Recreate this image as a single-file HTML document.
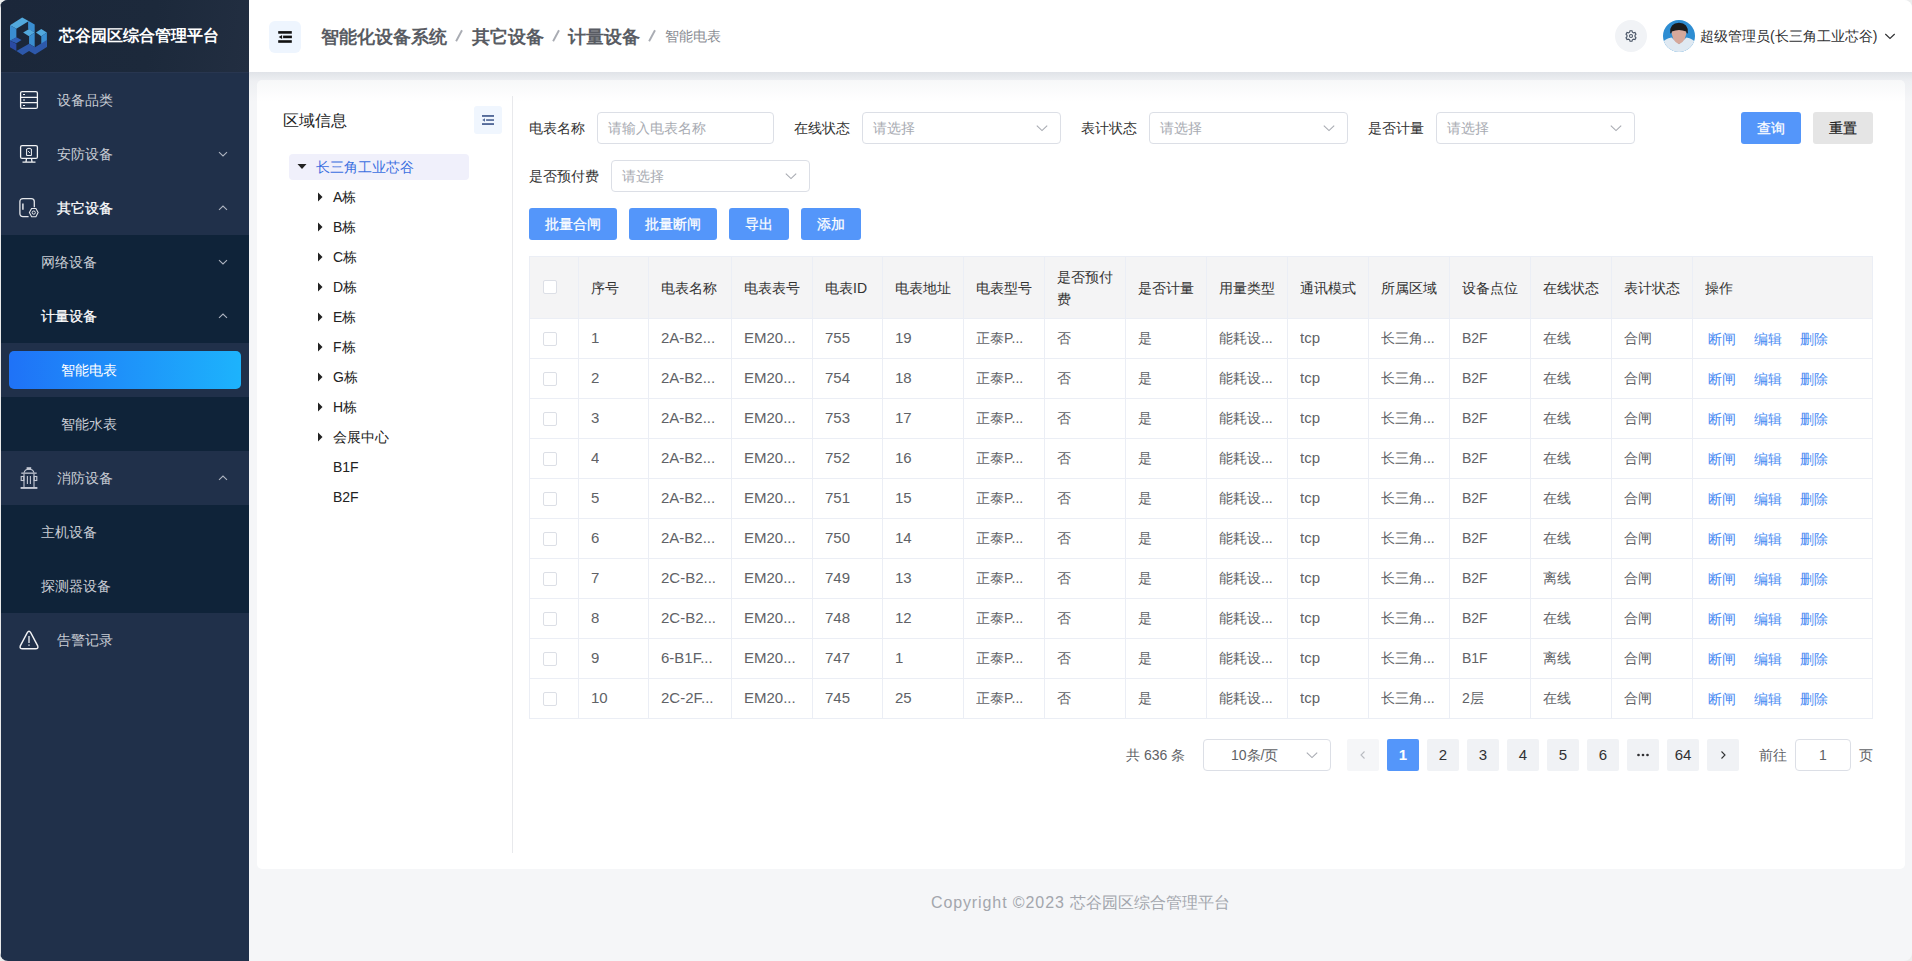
<!DOCTYPE html>
<html><head><meta charset="utf-8">
<style>
*{margin:0;padding:0;box-sizing:border-box}
html,body{width:1912px;height:961px;overflow:hidden;background:#eceded;font-family:"Liberation Sans",sans-serif;font-size:14px;color:#333}
.abs{position:absolute}
#win{position:absolute;left:0;top:0;width:1912px;height:961px;border-radius:8px;overflow:hidden;background:#f5f6f8}
#side{position:absolute;left:0;top:0;width:249px;height:961px;background:#20304a}
#logo{position:absolute;left:0;top:0;width:249px;height:73px;border-bottom:1px solid #283650;background:linear-gradient(100deg,#1b273a 0%,#1c293b 60%,#222e41 100%)}
.mi{position:absolute;left:0;width:249px;height:54px;line-height:54px;color:#c8ccd4;font-size:14px;white-space:nowrap}
.mi .t{position:absolute;left:57px;top:0}
.mi svg.ch{position:absolute;left:217px;top:21px}
.sub{background:#0f2339}
.ico{position:absolute}
#header{position:absolute;left:249px;top:0;width:1663px;height:72px;background:#fff}
#shadow{position:absolute;left:249px;top:72px;width:1663px;height:30px;background:linear-gradient(rgba(40,60,90,0.10),rgba(40,60,90,0.035) 30%,rgba(40,60,90,0))}
#card{position:absolute;left:257px;top:80px;width:1648px;height:789px;background:#fff;border-radius:5px}
.lbl{position:absolute;font-size:14px;color:#333;line-height:32px;height:32px;white-space:nowrap}
.inp{position:absolute;height:32px;border:1px solid #dcdfe6;border-radius:4px;background:#fff;color:#a8abb2;line-height:30px;padding-left:10px;font-size:14px;white-space:nowrap}
.inp svg{position:absolute;right:11px;top:8px}
.btn{position:absolute;height:32px;line-height:32px;border-radius:3px;background:#5496fa;color:#fff;text-align:center;font-size:14px;-webkit-text-stroke:0.25px #fff}
.th,.td{position:absolute;white-space:nowrap;overflow:hidden}
.pg{position:absolute;top:739px;width:32px;height:32px;line-height:32px;border-radius:2px;background:#f0f2f5;color:#303133;text-align:center;font-size:15px}
</style></head><body><div id="win">

<div id="side"><div id="logo"></div>
<svg class="ico" style="left:0;top:0" width="60" height="60" viewBox="0 0 960 960">
<polygon points="160,405 355,280 450,330 450,345 262,458" fill="#52a9dd"/>
<polygon points="160,405 262,458 262,600 160,650" fill="#3a8ed1"/>
<polygon points="160,650 262,595 345,640 262,690" fill="#2f5fb5"/>
<polygon points="160,650 262,700 262,815 160,755" fill="#2a4aa3"/>
<polygon points="450,330 555,390 555,520 450,460" fill="#3a8ed1"/>
<polygon points="370,520 465,463 555,520 465,578" fill="#52a9dd"/>
<polygon points="465,578 555,520 555,752 465,700" fill="#3a8ed1"/>
<polygon points="575,520 660,463 750,520 660,578" fill="#52a9dd"/>
<polygon points="660,578 750,520 750,752 660,700" fill="#3a8ed1"/>
<polygon points="262,815 465,700 560,755 750,640 750,752 560,870 465,815 362,878" fill="#2d58aa"/>
</svg>
<div class="abs" style="left:59px;top:24px;font-size:16px;font-weight:bold;color:#fff;line-height:24px;white-space:nowrap">芯谷园区综合管理平台</div>
<div class="mi" style="top:73px"><span class="t" style="left:57px;">设备品类</span></div>
<div class="mi" style="top:127px"><span class="t" style="left:57px;">安防设备</span><svg class="ch" width="12" height="12" viewBox="0 0 12 12"><path d="M2 4.2 L6 8 L10 4.2" fill="none" stroke="#aeb4c0" stroke-width="1.1"/></svg></div>
<div class="mi" style="top:181px"><span class="t" style="left:57px;color:#fff;-webkit-text-stroke:0.25px #fff;">其它设备</span><svg class="ch" width="12" height="12" viewBox="0 0 12 12"><path d="M2 7.8 L6 4 L10 7.8" fill="none" stroke="#aeb4c0" stroke-width="1.1"/></svg></div>
<div class="mi sub" style="top:235px"><span class="t" style="left:41px;">网络设备</span><svg class="ch" width="12" height="12" viewBox="0 0 12 12"><path d="M2 4.2 L6 8 L10 4.2" fill="none" stroke="#aeb4c0" stroke-width="1.1"/></svg></div>
<div class="mi sub" style="top:289px"><span class="t" style="left:41px;color:#fff;-webkit-text-stroke:0.25px #fff;">计量设备</span><svg class="ch" width="12" height="12" viewBox="0 0 12 12"><path d="M2 7.8 L6 4 L10 7.8" fill="none" stroke="#aeb4c0" stroke-width="1.1"/></svg></div>
<div class="mi" style="top:343px"><div class="abs" style="left:9px;top:8px;width:232px;height:38px;border-radius:5px;background:linear-gradient(90deg,#1f72f7,#1db3fc)"></div><span class="t" style="left:61px;color:#fff">智能电表</span></div>
<div class="mi sub" style="top:397px"><span class="t" style="left:61px;">智能水表</span></div>
<div class="mi" style="top:451px"><span class="t" style="left:57px;">消防设备</span><svg class="ch" width="12" height="12" viewBox="0 0 12 12"><path d="M2 7.8 L6 4 L10 7.8" fill="none" stroke="#aeb4c0" stroke-width="1.1"/></svg></div>
<div class="mi sub" style="top:505px"><span class="t" style="left:41px;">主机设备</span></div>
<div class="mi sub" style="top:559px"><span class="t" style="left:41px;">探测器设备</span></div>
<div class="mi" style="top:613px"><span class="t" style="left:57px;">告警记录</span></div>
<svg class="ico" style="left:19px;top:90px" width="20" height="20" viewBox="0 0 20 20" fill="none" stroke="#f2f3f5" stroke-width="1.3">
<rect x="1.6" y="1.6" width="16.8" height="16.8" rx="1.5"/><line x1="1.6" y1="7.4" x2="18.4" y2="7.4"/><line x1="1.6" y1="12.6" x2="18.4" y2="12.6"/>
<line x1="4" y1="4.5" x2="6" y2="4.5" stroke-width="1.2"/><line x1="4" y1="10" x2="6" y2="10" stroke-width="1.2"/><line x1="4" y1="15.5" x2="6" y2="15.5" stroke-width="1.2"/></svg>
<svg class="ico" style="left:19px;top:144px" width="20" height="20" viewBox="0 0 20 20" fill="none" stroke="#f2f3f5" stroke-width="1.3">
<rect x="1.6" y="1.6" width="16.8" height="12.8" rx="1.5"/><path d="M7.5 14.4 L7 18 M12.5 14.4 L13 18 M3.5 18.2 H16.5"/>
<path d="M7.6 11.5 V5 Q10 3.5 12.4 5 V11.5 Z" stroke-width="1"/><path d="M9 7 L11 9" stroke-width="0.9"/></svg>
<svg class="ico" style="left:18px;top:197px" width="22" height="22" viewBox="0 0 22 22" fill="none" stroke="#e4e6ea" stroke-width="1.3">
<path d="M10.6 19.6 H5 Q1.9 19.6 1.9 16.5 V4.6 Q1.9 1.6 5 1.6 H13.2 Q16.3 1.6 16.3 4.6 V10.2"/><line x1="4.9" y1="6.5" x2="4.9" y2="12.7" stroke-width="1.5"/>
<path d="M13.6 11.5 H17.9 L20.1 15.6 L17.9 19.7 H13.6 L11.4 15.6 Z" stroke-width="1.1"/><circle cx="15.75" cy="15.6" r="1.6" stroke-width="1"/></svg>
<svg class="ico" style="left:19px;top:466px" width="20" height="24" viewBox="0 0 20 24" fill="none" stroke="#c5c9d4" stroke-width="1.1">
<rect x="7.6" y="1.2" width="4.6" height="2.6" fill="#c5c9d4" stroke="none"/><path d="M5 7.2 Q5.5 3.3 10 3.3 Q14.5 3.3 15 7.2"/>
<rect x="2.3" y="6.4" width="15.4" height="1.6" fill="#a3a9b8" stroke="none"/><path d="M5 8 V21.5 M15 8 V21.5"/>
<rect x="2.2" y="10.5" width="2.6" height="4" /><rect x="15.2" y="10.5" width="2.6" height="4"/>
<line x1="8.4" y1="10" x2="8.4" y2="18"/><line x1="11.4" y1="10" x2="11.4" y2="18"/><rect x="1.6" y="21" width="16.8" height="1.9" fill="#c5c9d4" stroke="none"/></svg>
<svg class="ico" style="left:18px;top:629px" width="22" height="22" viewBox="0 0 22 22" fill="none" stroke="#f2f3f5" stroke-width="1.4">
<path d="M9.3 3.6 Q11 1 12.7 3.6 L19.7 16.8 Q20.7 19.8 17.5 19.8 H4.5 Q1.3 19.8 2.3 16.8 Z"/><line x1="11" y1="7" x2="11" y2="14" stroke-width="1.3"/><line x1="11" y1="15.5" x2="11" y2="16.8" stroke-width="1.3"/></svg>
</div>
<div id="header"></div>
<div class="abs" style="left:269px;top:21px;width:32px;height:32px;border-radius:6px;background:#eef5fe"></div>
<svg class="ico" style="left:278px;top:30px" width="14" height="14" viewBox="0 0 14 14" fill="#111">
<rect x="0.2" y="1.1" width="13.6" height="2.6"/><rect x="5.1" y="5.6" width="8.8" height="2.6"/><polygon points="0.7,6.9 4.1,4.9 4.1,8.9"/><rect x="0.2" y="10.2" width="13.6" height="2.6"/></svg>
<div class="abs" style="left:321px;top:25px;font-size:18px;line-height:24px;font-weight:bold;color:#595c63;white-space:nowrap">智能化设备系统</div>
<div class="abs" style="left:472px;top:25px;font-size:18px;line-height:24px;font-weight:bold;color:#595c63;white-space:nowrap">其它设备</div>
<div class="abs" style="left:568px;top:25px;font-size:18px;line-height:24px;font-weight:bold;color:#595c63;white-space:nowrap">计量设备</div>
<svg class="ico" style="left:455px;top:29px" width="8" height="14" viewBox="0 0 8 14"><line x1="1.1" y1="12.3" x2="7" y2="1.3" stroke="#a9acb3" stroke-width="1.9"/></svg>
<svg class="ico" style="left:552px;top:29px" width="8" height="14" viewBox="0 0 8 14"><line x1="1.1" y1="12.3" x2="7" y2="1.3" stroke="#a9acb3" stroke-width="1.9"/></svg>
<svg class="ico" style="left:648px;top:29px" width="8" height="14" viewBox="0 0 8 14"><line x1="1.1" y1="12.3" x2="7" y2="1.3" stroke="#a9acb3" stroke-width="1.9"/></svg>
<div class="abs" style="left:665px;top:25px;font-size:14px;line-height:22px;color:#8a8d93;white-space:nowrap">智能电表</div>
<div class="abs" style="left:1615px;top:20px;width:32px;height:32px;border-radius:50%;background:#f1f3f6"></div>
<svg class="ico" style="left:1625px;top:30px" width="12" height="12" viewBox="0 0 12 12" fill="none" stroke="#4a5567" stroke-width="1.1">
<path d="M5 0.8 H7 L7.4 2.2 L8.6 2.9 L10 2.5 L11 4.2 L10 5.3 V6.7 L11 7.8 L10 9.5 L8.6 9.1 L7.4 9.8 L7 11.2 H5 L4.6 9.8 L3.4 9.1 L2 9.5 L1 7.8 L2 6.7 V5.3 L1 4.2 L2 2.5 L3.4 2.9 L4.6 2.2 Z"/><circle cx="6" cy="6" r="1.5"/></svg>
<svg class="ico" style="left:1663px;top:20px" width="32" height="32" viewBox="0 0 32 32">
<defs><clipPath id="av"><circle cx="16" cy="16" r="16"/></clipPath><filter id="bl"><feGaussianBlur stdDeviation="0.5"/></filter></defs>
<g clip-path="url(#av)"><rect width="32" height="32" fill="#2e8dd2"/><g filter="url(#bl)">
<path d="M-1 23 Q2 18.5 8.5 17.5 L16 24 L23.5 17.5 Q30 18.5 33 23 V33 H-1 Z" fill="#dfe9f2"/>
<path d="M8.4 9 Q8.2 21 16 24.2 Q23.8 21 23.6 9 Z" fill="#d6a89b"/>
<path d="M7.2 13 Q6.5 3 16 2.8 Q25.5 3 24.8 13 Q23.6 14.5 23.2 11.5 Q16 8.5 8.8 11.5 Q8.4 14.5 7.2 13 Z" fill="#1a1b1f"/>
</g></g></svg>
<div class="abs" style="left:1700px;top:24px;font-size:14px;line-height:24px;color:#303133;white-space:nowrap">超级管理员(长三角工业芯谷)</div>
<svg class="ico" style="left:1883px;top:29px" width="14" height="14" viewBox="0 0 14 14"><path d="M2.3 5 L7 9.4 L11.7 5" fill="none" stroke="#303133" stroke-width="1.2"/></svg>
<div id="card"></div><div id="shadow"></div>
<div class="abs" style="left:283px;top:109px;font-size:16px;line-height:24px;color:#222;white-space:nowrap">区域信息</div>
<div class="abs" style="left:474px;top:106px;width:28px;height:28px;border-radius:3px;background:#f0f6fe"></div>
<svg class="ico" style="left:481px;top:113px" width="14" height="14" viewBox="0 0 14 14" fill="#556b9a">
<rect x="1" y="2" width="12" height="1.9"/><rect x="5.1" y="6.2" width="7.9" height="1.7"/><polygon points="1.2,7 4,5.3 4,8.7"/><rect x="1" y="10.1" width="12" height="1.9"/></svg>
<div class="abs" style="left:512px;top:96px;width:1px;height:757px;background:#e8e9ec"></div>
<div class="abs" style="left:289px;top:154px;width:180px;height:26px;border-radius:4px;background:#f0f0fb"></div>
<svg class="ico" style="left:296px;top:162px" width="12" height="10" viewBox="0 0 12 10"><polygon points="1.5,2 10.5,2 6,7" fill="#222"/></svg>
<div class="abs" style="left:316px;top:155px;font-size:14px;line-height:24px;color:#3b6fe0;white-space:nowrap">长三角工业芯谷</div>
<svg class="ico" style="left:315px;top:191px" width="10" height="12" viewBox="0 0 10 12"><polygon points="3,1.5 7.5,6 3,10.5" fill="#222"/></svg>
<div class="abs" style="left:333px;top:185px;font-size:14px;line-height:24px;color:#222;white-space:nowrap">A栋</div>
<svg class="ico" style="left:315px;top:221px" width="10" height="12" viewBox="0 0 10 12"><polygon points="3,1.5 7.5,6 3,10.5" fill="#222"/></svg>
<div class="abs" style="left:333px;top:215px;font-size:14px;line-height:24px;color:#222;white-space:nowrap">B栋</div>
<svg class="ico" style="left:315px;top:251px" width="10" height="12" viewBox="0 0 10 12"><polygon points="3,1.5 7.5,6 3,10.5" fill="#222"/></svg>
<div class="abs" style="left:333px;top:245px;font-size:14px;line-height:24px;color:#222;white-space:nowrap">C栋</div>
<svg class="ico" style="left:315px;top:281px" width="10" height="12" viewBox="0 0 10 12"><polygon points="3,1.5 7.5,6 3,10.5" fill="#222"/></svg>
<div class="abs" style="left:333px;top:275px;font-size:14px;line-height:24px;color:#222;white-space:nowrap">D栋</div>
<svg class="ico" style="left:315px;top:311px" width="10" height="12" viewBox="0 0 10 12"><polygon points="3,1.5 7.5,6 3,10.5" fill="#222"/></svg>
<div class="abs" style="left:333px;top:305px;font-size:14px;line-height:24px;color:#222;white-space:nowrap">E栋</div>
<svg class="ico" style="left:315px;top:341px" width="10" height="12" viewBox="0 0 10 12"><polygon points="3,1.5 7.5,6 3,10.5" fill="#222"/></svg>
<div class="abs" style="left:333px;top:335px;font-size:14px;line-height:24px;color:#222;white-space:nowrap">F栋</div>
<svg class="ico" style="left:315px;top:371px" width="10" height="12" viewBox="0 0 10 12"><polygon points="3,1.5 7.5,6 3,10.5" fill="#222"/></svg>
<div class="abs" style="left:333px;top:365px;font-size:14px;line-height:24px;color:#222;white-space:nowrap">G栋</div>
<svg class="ico" style="left:315px;top:401px" width="10" height="12" viewBox="0 0 10 12"><polygon points="3,1.5 7.5,6 3,10.5" fill="#222"/></svg>
<div class="abs" style="left:333px;top:395px;font-size:14px;line-height:24px;color:#222;white-space:nowrap">H栋</div>
<svg class="ico" style="left:315px;top:431px" width="10" height="12" viewBox="0 0 10 12"><polygon points="3,1.5 7.5,6 3,10.5" fill="#222"/></svg>
<div class="abs" style="left:333px;top:425px;font-size:14px;line-height:24px;color:#222;white-space:nowrap">会展中心</div>
<div class="abs" style="left:333px;top:455px;font-size:14px;line-height:24px;color:#222;white-space:nowrap">B1F</div>
<div class="abs" style="left:333px;top:485px;font-size:14px;line-height:24px;color:#222;white-space:nowrap">B2F</div>
<div class="lbl" style="left:529px;top:112px">电表名称</div>
<div class="inp" style="left:597px;top:112px;width:177px">请输入电表名称</div>
<div class="lbl" style="left:794px;top:112px">在线状态</div>
<div class="inp" style="left:862px;top:112px;width:199px">请选择<svg width="14" height="14" viewBox="0 0 14 14"><path d="M1.8 4.6 L7 9.6 L12.2 4.6" fill="none" stroke="#a8abb2" stroke-width="1.1"/></svg></div>
<div class="lbl" style="left:1081px;top:112px">表计状态</div>
<div class="inp" style="left:1149px;top:112px;width:199px">请选择<svg width="14" height="14" viewBox="0 0 14 14"><path d="M1.8 4.6 L7 9.6 L12.2 4.6" fill="none" stroke="#a8abb2" stroke-width="1.1"/></svg></div>
<div class="lbl" style="left:1368px;top:112px">是否计量</div>
<div class="inp" style="left:1436px;top:112px;width:199px">请选择<svg width="14" height="14" viewBox="0 0 14 14"><path d="M1.8 4.6 L7 9.6 L12.2 4.6" fill="none" stroke="#a8abb2" stroke-width="1.1"/></svg></div>
<div class="lbl" style="left:529px;top:160px">是否预付费</div>
<div class="inp" style="left:611px;top:160px;width:199px">请选择<svg width="14" height="14" viewBox="0 0 14 14"><path d="M1.8 4.6 L7 9.6 L12.2 4.6" fill="none" stroke="#a8abb2" stroke-width="1.1"/></svg></div>
<div class="btn" style="left:1741px;top:112px;width:60px">查询</div>
<div class="btn" style="left:1813px;top:112px;width:60px;background:#e5e5e5;color:#222;-webkit-text-stroke:0.2px #222">重置</div>
<div class="btn" style="left:529px;top:208px;width:88px">批量合闸</div>
<div class="btn" style="left:629px;top:208px;width:88px">批量断闸</div>
<div class="btn" style="left:729px;top:208px;width:60px">导出</div>
<div class="btn" style="left:801px;top:208px;width:60px">添加</div>
<div class="abs" style="left:529px;top:256px;width:1343px;height:62px;background:#f4f4f5"></div>
<div class="abs" style="left:529px;top:256px;width:1px;height:462px;background:#ebeef5"></div>
<div class="abs" style="left:578px;top:256px;width:1px;height:462px;background:#ebeef5"></div>
<div class="abs" style="left:648px;top:256px;width:1px;height:462px;background:#ebeef5"></div>
<div class="abs" style="left:731px;top:256px;width:1px;height:462px;background:#ebeef5"></div>
<div class="abs" style="left:812px;top:256px;width:1px;height:462px;background:#ebeef5"></div>
<div class="abs" style="left:882px;top:256px;width:1px;height:462px;background:#ebeef5"></div>
<div class="abs" style="left:963px;top:256px;width:1px;height:462px;background:#ebeef5"></div>
<div class="abs" style="left:1044px;top:256px;width:1px;height:462px;background:#ebeef5"></div>
<div class="abs" style="left:1125px;top:256px;width:1px;height:462px;background:#ebeef5"></div>
<div class="abs" style="left:1206px;top:256px;width:1px;height:462px;background:#ebeef5"></div>
<div class="abs" style="left:1287px;top:256px;width:1px;height:462px;background:#ebeef5"></div>
<div class="abs" style="left:1368px;top:256px;width:1px;height:462px;background:#ebeef5"></div>
<div class="abs" style="left:1449px;top:256px;width:1px;height:462px;background:#ebeef5"></div>
<div class="abs" style="left:1530px;top:256px;width:1px;height:462px;background:#ebeef5"></div>
<div class="abs" style="left:1611px;top:256px;width:1px;height:462px;background:#ebeef5"></div>
<div class="abs" style="left:1692px;top:256px;width:1px;height:462px;background:#ebeef5"></div>
<div class="abs" style="left:1872px;top:256px;width:1px;height:462px;background:#ebeef5"></div>
<div class="abs" style="left:529px;top:256px;width:1344px;height:1px;background:#ebeef5"></div>
<div class="abs" style="left:529px;top:318px;width:1344px;height:1px;background:#ebeef5"></div>
<div class="abs" style="left:529px;top:358px;width:1344px;height:1px;background:#ebeef5"></div>
<div class="abs" style="left:529px;top:398px;width:1344px;height:1px;background:#ebeef5"></div>
<div class="abs" style="left:529px;top:438px;width:1344px;height:1px;background:#ebeef5"></div>
<div class="abs" style="left:529px;top:478px;width:1344px;height:1px;background:#ebeef5"></div>
<div class="abs" style="left:529px;top:518px;width:1344px;height:1px;background:#ebeef5"></div>
<div class="abs" style="left:529px;top:558px;width:1344px;height:1px;background:#ebeef5"></div>
<div class="abs" style="left:529px;top:598px;width:1344px;height:1px;background:#ebeef5"></div>
<div class="abs" style="left:529px;top:638px;width:1344px;height:1px;background:#ebeef5"></div>
<div class="abs" style="left:529px;top:678px;width:1344px;height:1px;background:#ebeef5"></div>
<div class="abs" style="left:529px;top:718px;width:1344px;height:1px;background:#ebeef5"></div>
<div class="abs" style="left:543px;top:280px;width:14px;height:14px;border:1px solid #dcdfe6;border-radius:2px;background:#fff"></div>
<div class="th" style="left:591px;top:277px;font-size:14px;line-height:22px;color:#333">序号</div>
<div class="th" style="left:661px;top:277px;font-size:14px;line-height:22px;color:#333">电表名称</div>
<div class="th" style="left:744px;top:277px;font-size:14px;line-height:22px;color:#333">电表表号</div>
<div class="th" style="left:825px;top:277px;font-size:14px;line-height:22px;color:#333">电表ID</div>
<div class="th" style="left:895px;top:277px;font-size:14px;line-height:22px;color:#333">电表地址</div>
<div class="th" style="left:976px;top:277px;font-size:14px;line-height:22px;color:#333">电表型号</div>
<div class="th" style="left:1057px;top:266px;font-size:14px;line-height:22px;color:#333">是否预付<br>费</div>
<div class="th" style="left:1138px;top:277px;font-size:14px;line-height:22px;color:#333">是否计量</div>
<div class="th" style="left:1219px;top:277px;font-size:14px;line-height:22px;color:#333">用量类型</div>
<div class="th" style="left:1300px;top:277px;font-size:14px;line-height:22px;color:#333">通讯模式</div>
<div class="th" style="left:1381px;top:277px;font-size:14px;line-height:22px;color:#333">所属区域</div>
<div class="th" style="left:1462px;top:277px;font-size:14px;line-height:22px;color:#333">设备点位</div>
<div class="th" style="left:1543px;top:277px;font-size:14px;line-height:22px;color:#333">在线状态</div>
<div class="th" style="left:1624px;top:277px;font-size:14px;line-height:22px;color:#333">表计状态</div>
<div class="th" style="left:1705px;top:277px;font-size:14px;line-height:22px;color:#333">操作</div>
<div class="abs" style="left:543px;top:332px;width:14px;height:14px;border:1px solid #dcdfe6;border-radius:2px;background:#fff"></div>
<div class="td" style="left:591px;top:327px;font-size:15px;line-height:22px;color:#606266">1</div>
<div class="td" style="left:661px;top:327px;font-size:15px;line-height:22px;color:#606266">2A-B2...</div>
<div class="td" style="left:744px;top:327px;font-size:15px;line-height:22px;color:#606266">EM20...</div>
<div class="td" style="left:825px;top:327px;font-size:15px;line-height:22px;color:#606266">755</div>
<div class="td" style="left:895px;top:327px;font-size:15px;line-height:22px;color:#606266">19</div>
<div class="td" style="left:976px;top:327px;font-size:14px;line-height:22px;color:#606266">正泰P...</div>
<div class="td" style="left:1057px;top:327px;font-size:14px;line-height:22px;color:#606266">否</div>
<div class="td" style="left:1138px;top:327px;font-size:14px;line-height:22px;color:#606266">是</div>
<div class="td" style="left:1219px;top:327px;font-size:14px;line-height:22px;color:#606266">能耗设...</div>
<div class="td" style="left:1300px;top:327px;font-size:15px;line-height:22px;color:#606266">tcp</div>
<div class="td" style="left:1381px;top:327px;font-size:14px;line-height:22px;color:#606266">长三角...</div>
<div class="td" style="left:1462px;top:327px;font-size:14px;line-height:22px;color:#606266">B2F</div>
<div class="td" style="left:1543px;top:327px;font-size:14px;line-height:22px;color:#606266">在线</div>
<div class="td" style="left:1624px;top:327px;font-size:14px;line-height:22px;color:#606266">合闸</div>
<div class="td" style="left:1708px;top:328px;font-size:14px;line-height:22px;color:#4b8cf3">断闸</div>
<div class="td" style="left:1754px;top:328px;font-size:14px;line-height:22px;color:#4b8cf3">编辑</div>
<div class="td" style="left:1800px;top:328px;font-size:14px;line-height:22px;color:#4b8cf3">删除</div>
<div class="abs" style="left:543px;top:372px;width:14px;height:14px;border:1px solid #dcdfe6;border-radius:2px;background:#fff"></div>
<div class="td" style="left:591px;top:367px;font-size:15px;line-height:22px;color:#606266">2</div>
<div class="td" style="left:661px;top:367px;font-size:15px;line-height:22px;color:#606266">2A-B2...</div>
<div class="td" style="left:744px;top:367px;font-size:15px;line-height:22px;color:#606266">EM20...</div>
<div class="td" style="left:825px;top:367px;font-size:15px;line-height:22px;color:#606266">754</div>
<div class="td" style="left:895px;top:367px;font-size:15px;line-height:22px;color:#606266">18</div>
<div class="td" style="left:976px;top:367px;font-size:14px;line-height:22px;color:#606266">正泰P...</div>
<div class="td" style="left:1057px;top:367px;font-size:14px;line-height:22px;color:#606266">否</div>
<div class="td" style="left:1138px;top:367px;font-size:14px;line-height:22px;color:#606266">是</div>
<div class="td" style="left:1219px;top:367px;font-size:14px;line-height:22px;color:#606266">能耗设...</div>
<div class="td" style="left:1300px;top:367px;font-size:15px;line-height:22px;color:#606266">tcp</div>
<div class="td" style="left:1381px;top:367px;font-size:14px;line-height:22px;color:#606266">长三角...</div>
<div class="td" style="left:1462px;top:367px;font-size:14px;line-height:22px;color:#606266">B2F</div>
<div class="td" style="left:1543px;top:367px;font-size:14px;line-height:22px;color:#606266">在线</div>
<div class="td" style="left:1624px;top:367px;font-size:14px;line-height:22px;color:#606266">合闸</div>
<div class="td" style="left:1708px;top:368px;font-size:14px;line-height:22px;color:#4b8cf3">断闸</div>
<div class="td" style="left:1754px;top:368px;font-size:14px;line-height:22px;color:#4b8cf3">编辑</div>
<div class="td" style="left:1800px;top:368px;font-size:14px;line-height:22px;color:#4b8cf3">删除</div>
<div class="abs" style="left:543px;top:412px;width:14px;height:14px;border:1px solid #dcdfe6;border-radius:2px;background:#fff"></div>
<div class="td" style="left:591px;top:407px;font-size:15px;line-height:22px;color:#606266">3</div>
<div class="td" style="left:661px;top:407px;font-size:15px;line-height:22px;color:#606266">2A-B2...</div>
<div class="td" style="left:744px;top:407px;font-size:15px;line-height:22px;color:#606266">EM20...</div>
<div class="td" style="left:825px;top:407px;font-size:15px;line-height:22px;color:#606266">753</div>
<div class="td" style="left:895px;top:407px;font-size:15px;line-height:22px;color:#606266">17</div>
<div class="td" style="left:976px;top:407px;font-size:14px;line-height:22px;color:#606266">正泰P...</div>
<div class="td" style="left:1057px;top:407px;font-size:14px;line-height:22px;color:#606266">否</div>
<div class="td" style="left:1138px;top:407px;font-size:14px;line-height:22px;color:#606266">是</div>
<div class="td" style="left:1219px;top:407px;font-size:14px;line-height:22px;color:#606266">能耗设...</div>
<div class="td" style="left:1300px;top:407px;font-size:15px;line-height:22px;color:#606266">tcp</div>
<div class="td" style="left:1381px;top:407px;font-size:14px;line-height:22px;color:#606266">长三角...</div>
<div class="td" style="left:1462px;top:407px;font-size:14px;line-height:22px;color:#606266">B2F</div>
<div class="td" style="left:1543px;top:407px;font-size:14px;line-height:22px;color:#606266">在线</div>
<div class="td" style="left:1624px;top:407px;font-size:14px;line-height:22px;color:#606266">合闸</div>
<div class="td" style="left:1708px;top:408px;font-size:14px;line-height:22px;color:#4b8cf3">断闸</div>
<div class="td" style="left:1754px;top:408px;font-size:14px;line-height:22px;color:#4b8cf3">编辑</div>
<div class="td" style="left:1800px;top:408px;font-size:14px;line-height:22px;color:#4b8cf3">删除</div>
<div class="abs" style="left:543px;top:452px;width:14px;height:14px;border:1px solid #dcdfe6;border-radius:2px;background:#fff"></div>
<div class="td" style="left:591px;top:447px;font-size:15px;line-height:22px;color:#606266">4</div>
<div class="td" style="left:661px;top:447px;font-size:15px;line-height:22px;color:#606266">2A-B2...</div>
<div class="td" style="left:744px;top:447px;font-size:15px;line-height:22px;color:#606266">EM20...</div>
<div class="td" style="left:825px;top:447px;font-size:15px;line-height:22px;color:#606266">752</div>
<div class="td" style="left:895px;top:447px;font-size:15px;line-height:22px;color:#606266">16</div>
<div class="td" style="left:976px;top:447px;font-size:14px;line-height:22px;color:#606266">正泰P...</div>
<div class="td" style="left:1057px;top:447px;font-size:14px;line-height:22px;color:#606266">否</div>
<div class="td" style="left:1138px;top:447px;font-size:14px;line-height:22px;color:#606266">是</div>
<div class="td" style="left:1219px;top:447px;font-size:14px;line-height:22px;color:#606266">能耗设...</div>
<div class="td" style="left:1300px;top:447px;font-size:15px;line-height:22px;color:#606266">tcp</div>
<div class="td" style="left:1381px;top:447px;font-size:14px;line-height:22px;color:#606266">长三角...</div>
<div class="td" style="left:1462px;top:447px;font-size:14px;line-height:22px;color:#606266">B2F</div>
<div class="td" style="left:1543px;top:447px;font-size:14px;line-height:22px;color:#606266">在线</div>
<div class="td" style="left:1624px;top:447px;font-size:14px;line-height:22px;color:#606266">合闸</div>
<div class="td" style="left:1708px;top:448px;font-size:14px;line-height:22px;color:#4b8cf3">断闸</div>
<div class="td" style="left:1754px;top:448px;font-size:14px;line-height:22px;color:#4b8cf3">编辑</div>
<div class="td" style="left:1800px;top:448px;font-size:14px;line-height:22px;color:#4b8cf3">删除</div>
<div class="abs" style="left:543px;top:492px;width:14px;height:14px;border:1px solid #dcdfe6;border-radius:2px;background:#fff"></div>
<div class="td" style="left:591px;top:487px;font-size:15px;line-height:22px;color:#606266">5</div>
<div class="td" style="left:661px;top:487px;font-size:15px;line-height:22px;color:#606266">2A-B2...</div>
<div class="td" style="left:744px;top:487px;font-size:15px;line-height:22px;color:#606266">EM20...</div>
<div class="td" style="left:825px;top:487px;font-size:15px;line-height:22px;color:#606266">751</div>
<div class="td" style="left:895px;top:487px;font-size:15px;line-height:22px;color:#606266">15</div>
<div class="td" style="left:976px;top:487px;font-size:14px;line-height:22px;color:#606266">正泰P...</div>
<div class="td" style="left:1057px;top:487px;font-size:14px;line-height:22px;color:#606266">否</div>
<div class="td" style="left:1138px;top:487px;font-size:14px;line-height:22px;color:#606266">是</div>
<div class="td" style="left:1219px;top:487px;font-size:14px;line-height:22px;color:#606266">能耗设...</div>
<div class="td" style="left:1300px;top:487px;font-size:15px;line-height:22px;color:#606266">tcp</div>
<div class="td" style="left:1381px;top:487px;font-size:14px;line-height:22px;color:#606266">长三角...</div>
<div class="td" style="left:1462px;top:487px;font-size:14px;line-height:22px;color:#606266">B2F</div>
<div class="td" style="left:1543px;top:487px;font-size:14px;line-height:22px;color:#606266">在线</div>
<div class="td" style="left:1624px;top:487px;font-size:14px;line-height:22px;color:#606266">合闸</div>
<div class="td" style="left:1708px;top:488px;font-size:14px;line-height:22px;color:#4b8cf3">断闸</div>
<div class="td" style="left:1754px;top:488px;font-size:14px;line-height:22px;color:#4b8cf3">编辑</div>
<div class="td" style="left:1800px;top:488px;font-size:14px;line-height:22px;color:#4b8cf3">删除</div>
<div class="abs" style="left:543px;top:532px;width:14px;height:14px;border:1px solid #dcdfe6;border-radius:2px;background:#fff"></div>
<div class="td" style="left:591px;top:527px;font-size:15px;line-height:22px;color:#606266">6</div>
<div class="td" style="left:661px;top:527px;font-size:15px;line-height:22px;color:#606266">2A-B2...</div>
<div class="td" style="left:744px;top:527px;font-size:15px;line-height:22px;color:#606266">EM20...</div>
<div class="td" style="left:825px;top:527px;font-size:15px;line-height:22px;color:#606266">750</div>
<div class="td" style="left:895px;top:527px;font-size:15px;line-height:22px;color:#606266">14</div>
<div class="td" style="left:976px;top:527px;font-size:14px;line-height:22px;color:#606266">正泰P...</div>
<div class="td" style="left:1057px;top:527px;font-size:14px;line-height:22px;color:#606266">否</div>
<div class="td" style="left:1138px;top:527px;font-size:14px;line-height:22px;color:#606266">是</div>
<div class="td" style="left:1219px;top:527px;font-size:14px;line-height:22px;color:#606266">能耗设...</div>
<div class="td" style="left:1300px;top:527px;font-size:15px;line-height:22px;color:#606266">tcp</div>
<div class="td" style="left:1381px;top:527px;font-size:14px;line-height:22px;color:#606266">长三角...</div>
<div class="td" style="left:1462px;top:527px;font-size:14px;line-height:22px;color:#606266">B2F</div>
<div class="td" style="left:1543px;top:527px;font-size:14px;line-height:22px;color:#606266">在线</div>
<div class="td" style="left:1624px;top:527px;font-size:14px;line-height:22px;color:#606266">合闸</div>
<div class="td" style="left:1708px;top:528px;font-size:14px;line-height:22px;color:#4b8cf3">断闸</div>
<div class="td" style="left:1754px;top:528px;font-size:14px;line-height:22px;color:#4b8cf3">编辑</div>
<div class="td" style="left:1800px;top:528px;font-size:14px;line-height:22px;color:#4b8cf3">删除</div>
<div class="abs" style="left:543px;top:572px;width:14px;height:14px;border:1px solid #dcdfe6;border-radius:2px;background:#fff"></div>
<div class="td" style="left:591px;top:567px;font-size:15px;line-height:22px;color:#606266">7</div>
<div class="td" style="left:661px;top:567px;font-size:15px;line-height:22px;color:#606266">2C-B2...</div>
<div class="td" style="left:744px;top:567px;font-size:15px;line-height:22px;color:#606266">EM20...</div>
<div class="td" style="left:825px;top:567px;font-size:15px;line-height:22px;color:#606266">749</div>
<div class="td" style="left:895px;top:567px;font-size:15px;line-height:22px;color:#606266">13</div>
<div class="td" style="left:976px;top:567px;font-size:14px;line-height:22px;color:#606266">正泰P...</div>
<div class="td" style="left:1057px;top:567px;font-size:14px;line-height:22px;color:#606266">否</div>
<div class="td" style="left:1138px;top:567px;font-size:14px;line-height:22px;color:#606266">是</div>
<div class="td" style="left:1219px;top:567px;font-size:14px;line-height:22px;color:#606266">能耗设...</div>
<div class="td" style="left:1300px;top:567px;font-size:15px;line-height:22px;color:#606266">tcp</div>
<div class="td" style="left:1381px;top:567px;font-size:14px;line-height:22px;color:#606266">长三角...</div>
<div class="td" style="left:1462px;top:567px;font-size:14px;line-height:22px;color:#606266">B2F</div>
<div class="td" style="left:1543px;top:567px;font-size:14px;line-height:22px;color:#606266">离线</div>
<div class="td" style="left:1624px;top:567px;font-size:14px;line-height:22px;color:#606266">合闸</div>
<div class="td" style="left:1708px;top:568px;font-size:14px;line-height:22px;color:#4b8cf3">断闸</div>
<div class="td" style="left:1754px;top:568px;font-size:14px;line-height:22px;color:#4b8cf3">编辑</div>
<div class="td" style="left:1800px;top:568px;font-size:14px;line-height:22px;color:#4b8cf3">删除</div>
<div class="abs" style="left:543px;top:612px;width:14px;height:14px;border:1px solid #dcdfe6;border-radius:2px;background:#fff"></div>
<div class="td" style="left:591px;top:607px;font-size:15px;line-height:22px;color:#606266">8</div>
<div class="td" style="left:661px;top:607px;font-size:15px;line-height:22px;color:#606266">2C-B2...</div>
<div class="td" style="left:744px;top:607px;font-size:15px;line-height:22px;color:#606266">EM20...</div>
<div class="td" style="left:825px;top:607px;font-size:15px;line-height:22px;color:#606266">748</div>
<div class="td" style="left:895px;top:607px;font-size:15px;line-height:22px;color:#606266">12</div>
<div class="td" style="left:976px;top:607px;font-size:14px;line-height:22px;color:#606266">正泰P...</div>
<div class="td" style="left:1057px;top:607px;font-size:14px;line-height:22px;color:#606266">否</div>
<div class="td" style="left:1138px;top:607px;font-size:14px;line-height:22px;color:#606266">是</div>
<div class="td" style="left:1219px;top:607px;font-size:14px;line-height:22px;color:#606266">能耗设...</div>
<div class="td" style="left:1300px;top:607px;font-size:15px;line-height:22px;color:#606266">tcp</div>
<div class="td" style="left:1381px;top:607px;font-size:14px;line-height:22px;color:#606266">长三角...</div>
<div class="td" style="left:1462px;top:607px;font-size:14px;line-height:22px;color:#606266">B2F</div>
<div class="td" style="left:1543px;top:607px;font-size:14px;line-height:22px;color:#606266">在线</div>
<div class="td" style="left:1624px;top:607px;font-size:14px;line-height:22px;color:#606266">合闸</div>
<div class="td" style="left:1708px;top:608px;font-size:14px;line-height:22px;color:#4b8cf3">断闸</div>
<div class="td" style="left:1754px;top:608px;font-size:14px;line-height:22px;color:#4b8cf3">编辑</div>
<div class="td" style="left:1800px;top:608px;font-size:14px;line-height:22px;color:#4b8cf3">删除</div>
<div class="abs" style="left:543px;top:652px;width:14px;height:14px;border:1px solid #dcdfe6;border-radius:2px;background:#fff"></div>
<div class="td" style="left:591px;top:647px;font-size:15px;line-height:22px;color:#606266">9</div>
<div class="td" style="left:661px;top:647px;font-size:15px;line-height:22px;color:#606266">6-B1F...</div>
<div class="td" style="left:744px;top:647px;font-size:15px;line-height:22px;color:#606266">EM20...</div>
<div class="td" style="left:825px;top:647px;font-size:15px;line-height:22px;color:#606266">747</div>
<div class="td" style="left:895px;top:647px;font-size:15px;line-height:22px;color:#606266">1</div>
<div class="td" style="left:976px;top:647px;font-size:14px;line-height:22px;color:#606266">正泰P...</div>
<div class="td" style="left:1057px;top:647px;font-size:14px;line-height:22px;color:#606266">否</div>
<div class="td" style="left:1138px;top:647px;font-size:14px;line-height:22px;color:#606266">是</div>
<div class="td" style="left:1219px;top:647px;font-size:14px;line-height:22px;color:#606266">能耗设...</div>
<div class="td" style="left:1300px;top:647px;font-size:15px;line-height:22px;color:#606266">tcp</div>
<div class="td" style="left:1381px;top:647px;font-size:14px;line-height:22px;color:#606266">长三角...</div>
<div class="td" style="left:1462px;top:647px;font-size:14px;line-height:22px;color:#606266">B1F</div>
<div class="td" style="left:1543px;top:647px;font-size:14px;line-height:22px;color:#606266">离线</div>
<div class="td" style="left:1624px;top:647px;font-size:14px;line-height:22px;color:#606266">合闸</div>
<div class="td" style="left:1708px;top:648px;font-size:14px;line-height:22px;color:#4b8cf3">断闸</div>
<div class="td" style="left:1754px;top:648px;font-size:14px;line-height:22px;color:#4b8cf3">编辑</div>
<div class="td" style="left:1800px;top:648px;font-size:14px;line-height:22px;color:#4b8cf3">删除</div>
<div class="abs" style="left:543px;top:692px;width:14px;height:14px;border:1px solid #dcdfe6;border-radius:2px;background:#fff"></div>
<div class="td" style="left:591px;top:687px;font-size:15px;line-height:22px;color:#606266">10</div>
<div class="td" style="left:661px;top:687px;font-size:15px;line-height:22px;color:#606266">2C-2F...</div>
<div class="td" style="left:744px;top:687px;font-size:15px;line-height:22px;color:#606266">EM20...</div>
<div class="td" style="left:825px;top:687px;font-size:15px;line-height:22px;color:#606266">745</div>
<div class="td" style="left:895px;top:687px;font-size:15px;line-height:22px;color:#606266">25</div>
<div class="td" style="left:976px;top:687px;font-size:14px;line-height:22px;color:#606266">正泰P...</div>
<div class="td" style="left:1057px;top:687px;font-size:14px;line-height:22px;color:#606266">否</div>
<div class="td" style="left:1138px;top:687px;font-size:14px;line-height:22px;color:#606266">是</div>
<div class="td" style="left:1219px;top:687px;font-size:14px;line-height:22px;color:#606266">能耗设...</div>
<div class="td" style="left:1300px;top:687px;font-size:15px;line-height:22px;color:#606266">tcp</div>
<div class="td" style="left:1381px;top:687px;font-size:14px;line-height:22px;color:#606266">长三角...</div>
<div class="td" style="left:1462px;top:687px;font-size:14px;line-height:22px;color:#606266">2层</div>
<div class="td" style="left:1543px;top:687px;font-size:14px;line-height:22px;color:#606266">在线</div>
<div class="td" style="left:1624px;top:687px;font-size:14px;line-height:22px;color:#606266">合闸</div>
<div class="td" style="left:1708px;top:688px;font-size:14px;line-height:22px;color:#4b8cf3">断闸</div>
<div class="td" style="left:1754px;top:688px;font-size:14px;line-height:22px;color:#4b8cf3">编辑</div>
<div class="td" style="left:1800px;top:688px;font-size:14px;line-height:22px;color:#4b8cf3">删除</div>
<div class="abs" style="left:1126px;top:744px;font-size:14px;line-height:22px;color:#606266;white-space:nowrap">共 636 条</div>
<div class="inp" style="left:1203px;top:739px;width:128px;color:#606266;padding-left:27px">10条/页<svg width="14" height="14" viewBox="0 0 14 14"><path d="M1.8 4.6 L7 9.6 L12.2 4.6" fill="none" stroke="#a8abb2" stroke-width="1.1"/></svg></div>
<div class="pg" style="left:1347px;background:#f5f6f8"><svg width="12" height="12" viewBox="0 0 12 12" style="margin-top:10px"><path d="M7.5 2.5 L4 6 L7.5 9.5" fill="none" stroke="#b8bbc1" stroke-width="1.1"/></svg></div>
<div class="pg" style="left:1387px;background:#5496fa;color:#fff;font-weight:bold">1</div>
<div class="pg" style="left:1427px">2</div>
<div class="pg" style="left:1467px">3</div>
<div class="pg" style="left:1507px">4</div>
<div class="pg" style="left:1547px">5</div>
<div class="pg" style="left:1587px">6</div>
<div class="pg" style="left:1627px"><svg width="14" height="14" viewBox="0 0 14 14" style="margin-top:9px"><circle cx="2.5" cy="7" r="1.35" fill="#303133"/><circle cx="7" cy="7" r="1.35" fill="#303133"/><circle cx="11.5" cy="7" r="1.35" fill="#303133"/></svg></div>
<div class="pg" style="left:1667px">64</div>
<div class="pg" style="left:1707px"><svg width="12" height="12" viewBox="0 0 12 12" style="margin-top:10px"><path d="M4.5 2.5 L8 6 L4.5 9.5" fill="none" stroke="#303133" stroke-width="1.1"/></svg></div>
<div class="abs" style="left:1759px;top:744px;font-size:14px;line-height:22px;color:#606266;white-space:nowrap">前往</div>
<div class="inp" style="left:1795px;top:739px;width:56px;color:#606266;padding-left:0;text-align:center">1</div>
<div class="abs" style="left:1859px;top:744px;font-size:14px;line-height:22px;color:#606266;white-space:nowrap">页</div>
<div class="abs" style="left:249px;top:891px;width:1663px;text-align:center;font-size:16px;line-height:24px;color:#a3a6ad;white-space:nowrap"><span style="letter-spacing:0.9px">Copyright ©2023 </span>芯谷园区综合管理平台</div>
<div class="abs" style="left:0;top:0;width:1px;height:961px;background:#e9e9ea"></div>
</div></body></html>
